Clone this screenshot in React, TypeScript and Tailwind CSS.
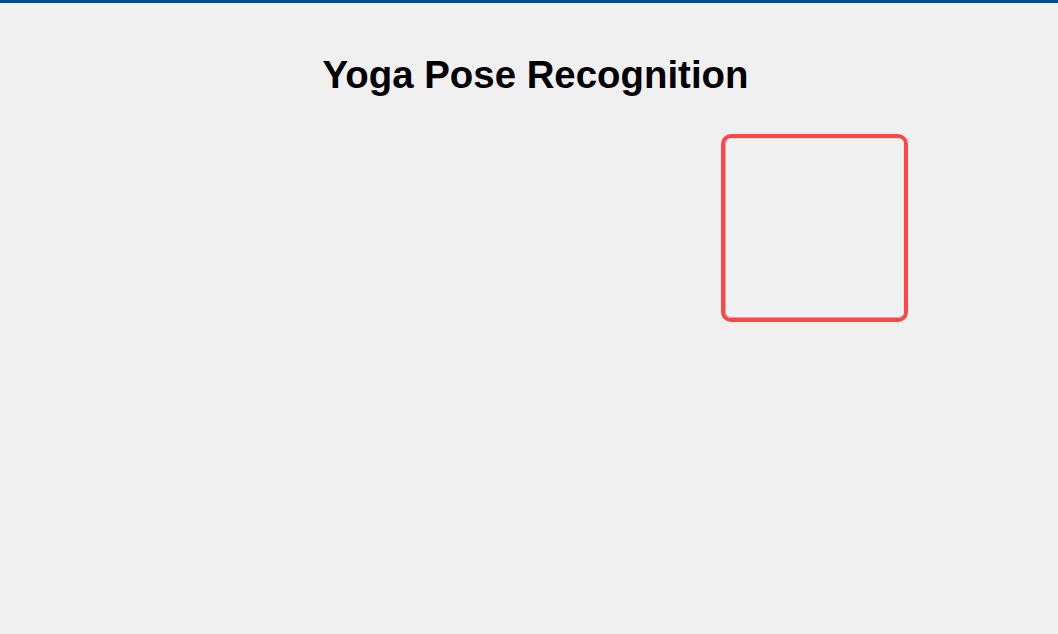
export default function App() {
    return (
        <div className="min-h-[634px] w-full bg-[#f0f0f0] border-t-[3px] border-[#004a8f] font-['Liberation_Sans',Arial,sans-serif]">
            <h1 className="pt-[50px] pl-[13px] text-center text-[38.4px] font-bold leading-[44px] text-black">
                Yoga Pose Recognition
            </h1>

            {/* camera frame */}
            <div className="mt-[37px] ml-[721px] h-[188px] w-[187px] rounded-[10px] border-4 border-[#ff4646]">
                <div className="h-full w-full rounded-[6px] border border-[#b4b4b4] border-t-[#d8d8d8] border-r-[#e4e4e4] bg-[#f0f0f0]" />
            </div>
        </div>
    )
}
